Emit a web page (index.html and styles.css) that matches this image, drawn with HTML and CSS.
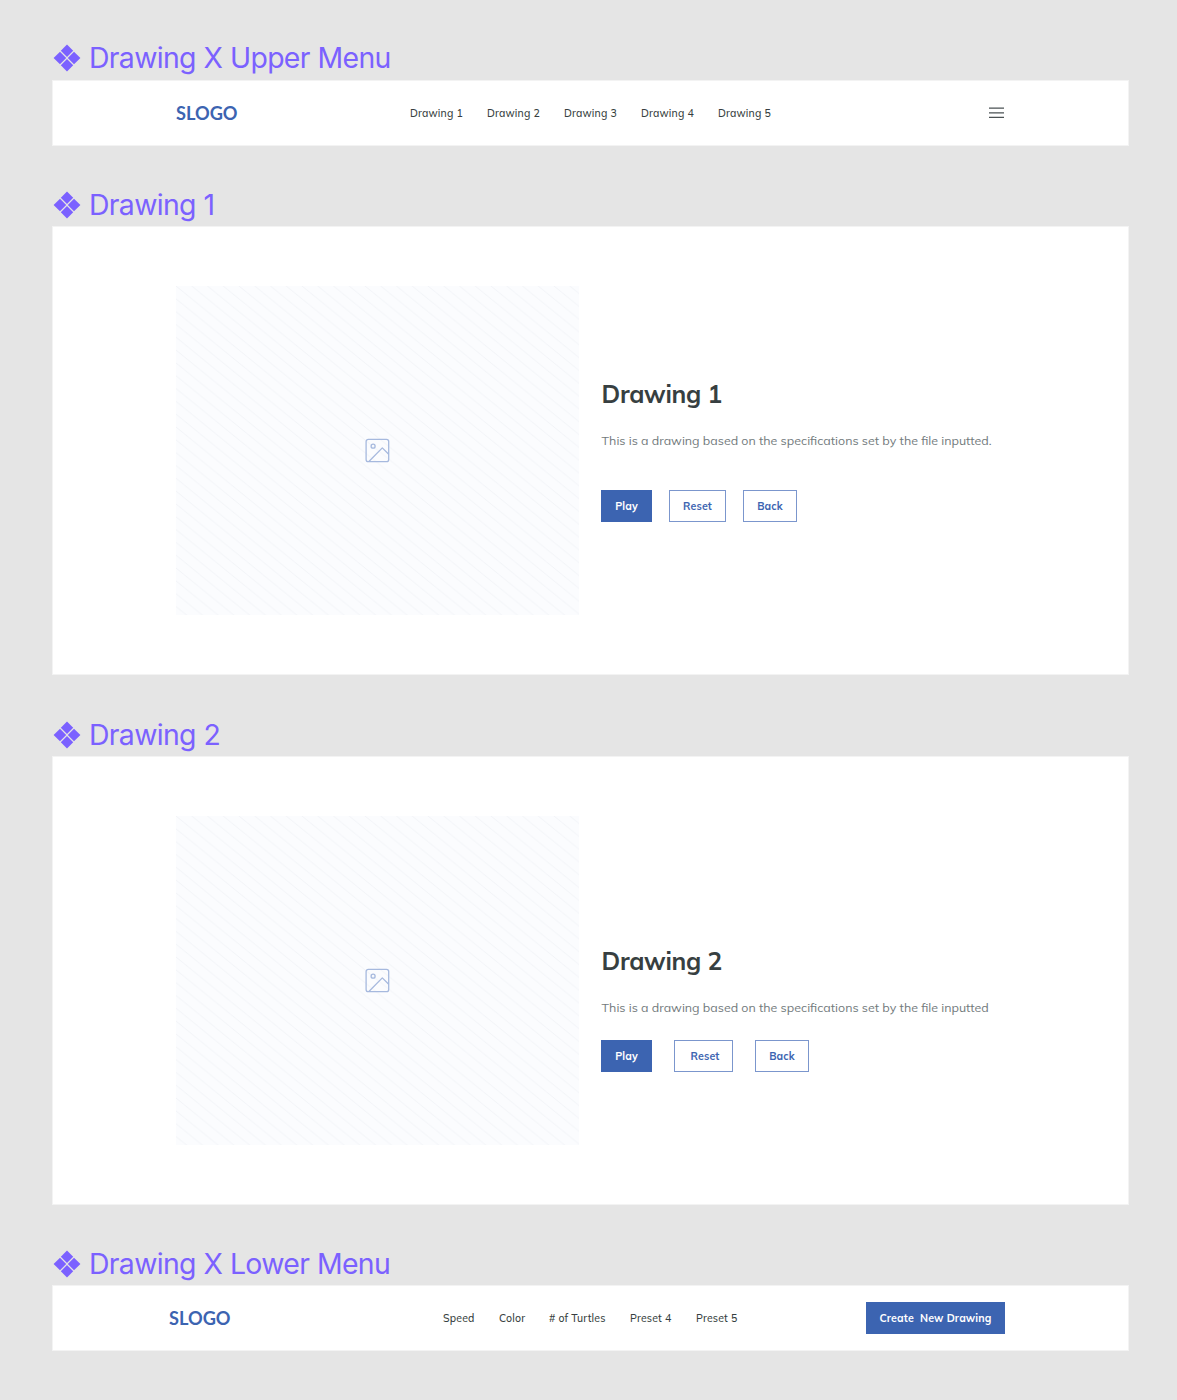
FILE: index.html
```html
<!DOCTYPE html>
<html lang="en">
<head>
<meta charset="utf-8">
<title>Slogo components</title>
<link rel="stylesheet" href="styles.css">
</head>
<body>
<svg class="defs" width="0" height="0" aria-hidden="true">
  <defs>
    <pattern id="stripes" width="15.75" height="12.82" patternUnits="userSpaceOnUse">
      <path d="M-15.75 -12.82L31.5 25.64M-15.75 0L15.75 25.64M0 -12.82L31.5 12.82" stroke="#eff1f5" stroke-width="0.8" fill="none"/>
    </pattern>
    <symbol id="component" viewBox="0 0 28 28">
      <path d="M14 .6L20.2 6.8 14 13 7.8 6.8zM7 7.8L13.2 14 7 20.2 .6 14zM21 7.8L27.4 14 21 20.2 14.8 14zM14 15L20.2 21.2 14 27.4 7.8 21.2z" fill="#7b61ff"/>
    </symbol>
    <symbol id="image" viewBox="0 0 26 26">
      <g fill="none" stroke="#a6b9de" stroke-width="1.3" stroke-linejoin="round">
        <rect x="2.1" y="2.3" width="22.6" height="22.4" rx="2.2"/>
        <circle cx="9.1" cy="9.2" r="2"/>
        <path d="M4.9 24.5L18.3 10.9 24.7 17.3"/>
      </g>
    </symbol>
  </defs>
</svg>
<main class="board">
  <section class="component">
    <h2 class="label"><svg class="label-icon"><use href="#component"/></svg><span>Drawing X Upper Menu</span></h2>
    <div class="panel menu menu-upper">
      <div class="logo">SLOGO</div>
      <nav class="links">
        <a>Drawing 1</a><a>Drawing 2</a><a>Drawing 3</a><a>Drawing 4</a><a>Drawing 5</a>
      </nav>
      <svg class="burger" width="16" height="12" viewBox="0 0 16 12"><path d="M0 1.2H15M0 5.8H15M0 10.3H15" stroke="#4b5254" stroke-width="1.2"/></svg>
    </div>
  </section>

  <section class="component">
    <h2 class="label"><svg class="label-icon"><use href="#component"/></svg><span>Drawing 1</span></h2>
    <div class="panel drawing">
      <div class="placeholder">
        <svg class="hatch"><rect width="100%" height="100%" fill="url(#stripes)"/></svg>
        <svg class="image-icon"><use href="#image"/></svg>
      </div>
      <div class="info">
        <h3 class="title">Drawing 1</h3>
        <p class="text">This is a drawing based on the specifications set by the file inputted.</p>
        <div class="actions">
          <button class="btn btn-primary play">Play</button>
          <button class="btn reset">Reset</button>
          <button class="btn back">Back</button>
        </div>
      </div>
    </div>
  </section>

  <section class="component">
    <h2 class="label"><svg class="label-icon"><use href="#component"/></svg><span>Drawing 2</span></h2>
    <div class="panel drawing">
      <div class="placeholder">
        <svg class="hatch"><rect width="100%" height="100%" fill="url(#stripes)"/></svg>
        <svg class="image-icon"><use href="#image"/></svg>
      </div>
      <div class="info info-low">
        <h3 class="title">Drawing 2</h3>
        <p class="text">This is a drawing based on the specifications set by the file inputted</p>
        <div class="actions">
          <button class="btn btn-primary play">Play</button>
          <button class="btn reset">Reset</button>
          <button class="btn back">Back</button>
        </div>
      </div>
    </div>
  </section>

  <section class="component">
    <h2 class="label"><svg class="label-icon"><use href="#component"/></svg><span>Drawing X Lower Menu</span></h2>
    <div class="panel menu menu-lower">
      <div class="logo">SLOGO</div>
      <nav class="links">
        <a class="w-speed">Speed</a><a class="w-color">Color</a><a class="w-turtles"># of Turtles</a><a class="w-preset">Preset 4</a><a class="w-preset">Preset 5</a>
      </nav>
      <button class="btn btn-primary create">Create&nbsp; New Drawing</button>
    </div>
  </section>
</main>
</body>
</html>
```
FILE: styles.css
```css
* { box-sizing: border-box; }

body {
  margin: 0;
  background: #e5e5e5;
  font-family: Mulish, Muli, Lato, sans-serif;
  color: #373f41;
}

h2, h3, p { margin: 0; }

.defs { display: block; }

.board {
  width: 1077px;
  margin-left: 52px;
  padding-top: 36px;
}

.component { padding-bottom: 37px; }

.label {
  display: flex;
  align-items: center;
  gap: 8px;
  height: 44px;
  padding-left: 1px;
  font: 400 28.4px/44px Inter, sans-serif;
  letter-spacing: -0.66px;
  word-spacing: 0.4px;
  color: #7b61ff;
  white-space: nowrap;
}
.component + .component .label { height: 43px; line-height: 44px; padding-top: 1px; }
.component + .component { padding-bottom: 38px; }
.component:nth-child(3) { padding-bottom: 37px; }
.label-icon { width: 28px; height: 28px; }

.panel {
  display: flex;
  background: #fff;
  border: 1px solid #f3f3f3;
}

.menu { height: 66px; align-items: center; }
.menu-upper { padding: 0 123px; }
.menu-lower { padding: 0 123px 0 116px; }

.logo {
  width: 62px;
  font: 700 18.2px/24px Lato, sans-serif;
  color: #3c64b1;
}

.links {
  display: flex;
  font-size: 10.5px;
  line-height: 16px;
  font-weight: 500;
  letter-spacing: 0.17px;
  white-space: nowrap;
}
.menu-upper .links { margin-left: 172px; gap: 24px; }
.menu-upper .links a { width: 53px; }
.menu-lower .links { margin-left: 212px; gap: 24px; }
.w-speed { width: 32px; }
.w-color { width: 26px; }
.w-turtles { width: 57px; }
.w-preset { width: 42px; }

.burger { margin-left: auto; }

.drawing { height: 449px; padding: 59px 123px; }

.placeholder {
  display: grid;
  place-items: center;
  width: 403px;
  height: 329px;
  background: #fbfcfe;
}
.hatch, .image-icon { grid-area: 1 / 1; }
.hatch { width: 100%; height: 100%; }
.image-icon { width: 26px; height: 26px; margin: 0 1px 1px 0; }

.info { padding: 90px 0 0 22px; }
.info-low { padding-top: 127px; }

.title {
  padding-left: 0.5px;
  font-size: 24.5px;
  line-height: 36px;
  font-weight: 700;
  letter-spacing: -0.25px;
}
.text {
  margin-top: 19px;
  padding-left: 0.6px;
  font-size: 12.43px;
  line-height: 20px;
  color: #737b7d;
  white-space: nowrap;
}
.actions { display: flex; gap: 17px; margin-top: 39px; }
.info-low .actions { gap: 22px; margin-top: 22px; }

.btn {
  height: 32px;
  padding: 0;
  border: 1px solid #7b96cd;
  background: #fff;
  color: #3c64b1;
  font: 700 10.6px/16px Mulish, Muli, Lato, sans-serif;
  letter-spacing: 0.16px;
  text-align: center;
  white-space: nowrap;
}
.btn-primary { background: #3c64b1; border-color: #3c64b1; color: #fff; }
.play { width: 51px; }
.reset { width: 57px; }
.back { width: 54px; }
.info-low .reset { width: 59px; padding-left: 3px; }
.create { width: 139px; margin-left: auto; }
```
